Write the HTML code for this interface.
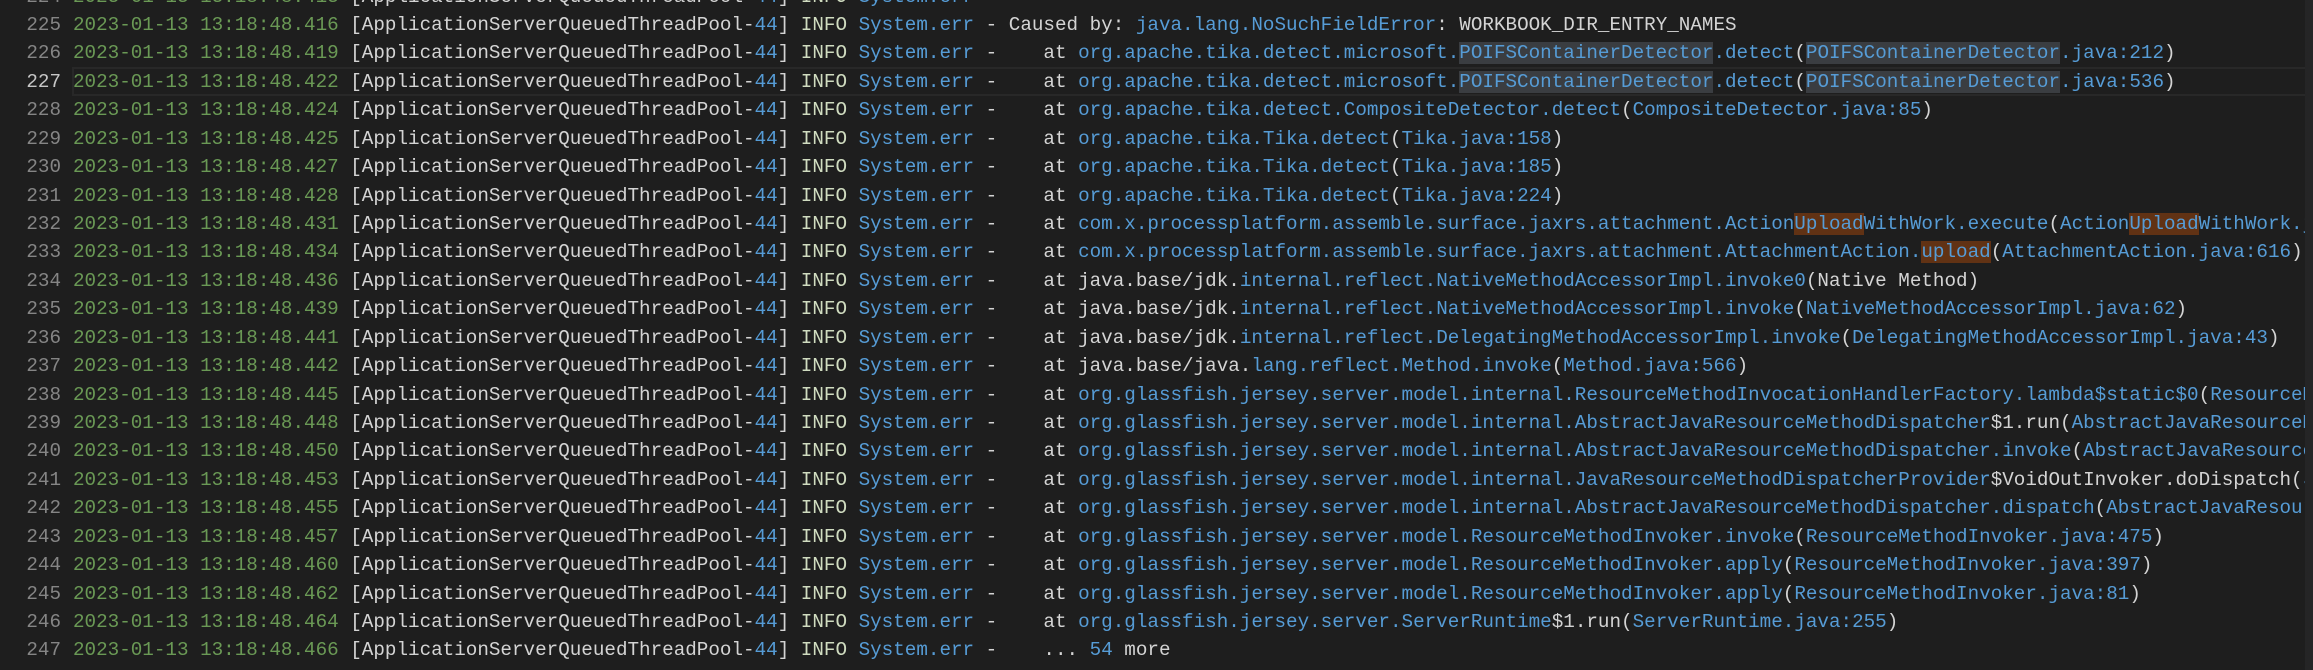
<!DOCTYPE html>
<html><head><meta charset="utf-8">
<style>
html,body{margin:0;padding:0;background:#1e1e1e;width:2313px;height:670px;overflow:hidden;}
.ed{position:absolute;left:0;top:0;width:2305px;height:670px;overflow:hidden;font-family:"Liberation Mono",monospace;font-size:19.25px;}
.sb{position:absolute;left:2305px;top:0;width:8px;height:670px;background:#252526;}
.r{position:absolute;left:0;height:28.43px;line-height:28.43px;white-space:pre;width:2305px;}
.n{position:absolute;left:0;width:61px;text-align:right;color:#858585;}
.c{position:absolute;left:73px;color:#d4d4d4;}
.g{color:#6a9955}.b{color:#569cd6}.i{color:#d0dcc0}
.h{background:#3a3d41}.o{background:#613214}
.cur{position:absolute;left:72px;top:67px;width:2240px;height:25px;border:2px solid #282828;border-right:none;}
</style></head><body>
<div class="ed">
<div class="cur"></div>
<div class="r" style="top:-17.5px"><span class="n">224</span><span class="c"><span class="g">2023-01-13 13:18:48.413</span> [ApplicationServerQueuedThreadPool-<span class="b">44</span>] <span class="i">INFO</span> <span class="b">System.err</span> - </span></div>
<div class="r" style="top:10.93px"><span class="n">225</span><span class="c"><span class="g">2023-01-13 13:18:48.416</span> [ApplicationServerQueuedThreadPool-<span class="b">44</span>] <span class="i">INFO</span> <span class="b">System.err</span> - Caused by: <span class="b">java.lang.NoSuchFieldError</span>: WORKBOOK_DIR_ENTRY_NAMES</span></div>
<div class="r" style="top:39.36px"><span class="n">226</span><span class="c"><span class="g">2023-01-13 13:18:48.419</span> [ApplicationServerQueuedThreadPool-<span class="b">44</span>] <span class="i">INFO</span> <span class="b">System.err</span> -    at <span class="b">org.apache.tika.detect.microsoft.<span class="h">POIFSContainerDetector</span>.detect</span>(<span class="b"><span class="h">POIFSContainerDetector</span>.java:212</span>)</span></div>
<div class="r" style="top:67.79px"><span class="n" style="color:#c6c6c6">227</span><span class="c"><span class="g">2023-01-13 13:18:48.422</span> [ApplicationServerQueuedThreadPool-<span class="b">44</span>] <span class="i">INFO</span> <span class="b">System.err</span> -    at <span class="b">org.apache.tika.detect.microsoft.<span class="h">POIFSContainerDetector</span>.detect</span>(<span class="b"><span class="h">POIFSContainerDetector</span>.java:536</span>)</span></div>
<div class="r" style="top:96.22px"><span class="n">228</span><span class="c"><span class="g">2023-01-13 13:18:48.424</span> [ApplicationServerQueuedThreadPool-<span class="b">44</span>] <span class="i">INFO</span> <span class="b">System.err</span> -    at <span class="b">org.apache.tika.detect.CompositeDetector.detect</span>(<span class="b">CompositeDetector.java:85</span>)</span></div>
<div class="r" style="top:124.65px"><span class="n">229</span><span class="c"><span class="g">2023-01-13 13:18:48.425</span> [ApplicationServerQueuedThreadPool-<span class="b">44</span>] <span class="i">INFO</span> <span class="b">System.err</span> -    at <span class="b">org.apache.tika.Tika.detect</span>(<span class="b">Tika.java:158</span>)</span></div>
<div class="r" style="top:153.08px"><span class="n">230</span><span class="c"><span class="g">2023-01-13 13:18:48.427</span> [ApplicationServerQueuedThreadPool-<span class="b">44</span>] <span class="i">INFO</span> <span class="b">System.err</span> -    at <span class="b">org.apache.tika.Tika.detect</span>(<span class="b">Tika.java:185</span>)</span></div>
<div class="r" style="top:181.51px"><span class="n">231</span><span class="c"><span class="g">2023-01-13 13:18:48.428</span> [ApplicationServerQueuedThreadPool-<span class="b">44</span>] <span class="i">INFO</span> <span class="b">System.err</span> -    at <span class="b">org.apache.tika.Tika.detect</span>(<span class="b">Tika.java:224</span>)</span></div>
<div class="r" style="top:209.94px"><span class="n">232</span><span class="c"><span class="g">2023-01-13 13:18:48.431</span> [ApplicationServerQueuedThreadPool-<span class="b">44</span>] <span class="i">INFO</span> <span class="b">System.err</span> -    at <span class="b">com.x.processplatform.assemble.surface.jaxrs.attachment.Action<span class="o">Upload</span>WithWork.execute</span>(<span class="b">Action<span class="o">Upload</span>WithWork.java:120</span>)</span></div>
<div class="r" style="top:238.37px"><span class="n">233</span><span class="c"><span class="g">2023-01-13 13:18:48.434</span> [ApplicationServerQueuedThreadPool-<span class="b">44</span>] <span class="i">INFO</span> <span class="b">System.err</span> -    at <span class="b">com.x.processplatform.assemble.surface.jaxrs.attachment.AttachmentAction.<span class="o">upload</span></span>(<span class="b">AttachmentAction.java:616</span>)</span></div>
<div class="r" style="top:266.8px"><span class="n">234</span><span class="c"><span class="g">2023-01-13 13:18:48.436</span> [ApplicationServerQueuedThreadPool-<span class="b">44</span>] <span class="i">INFO</span> <span class="b">System.err</span> -    at java.base/jdk.<span class="b">internal.reflect.NativeMethodAccessorImpl.invoke0</span>(Native Method)</span></div>
<div class="r" style="top:295.23px"><span class="n">235</span><span class="c"><span class="g">2023-01-13 13:18:48.439</span> [ApplicationServerQueuedThreadPool-<span class="b">44</span>] <span class="i">INFO</span> <span class="b">System.err</span> -    at java.base/jdk.<span class="b">internal.reflect.NativeMethodAccessorImpl.invoke</span>(<span class="b">NativeMethodAccessorImpl.java:62</span>)</span></div>
<div class="r" style="top:323.66px"><span class="n">236</span><span class="c"><span class="g">2023-01-13 13:18:48.441</span> [ApplicationServerQueuedThreadPool-<span class="b">44</span>] <span class="i">INFO</span> <span class="b">System.err</span> -    at java.base/jdk.<span class="b">internal.reflect.DelegatingMethodAccessorImpl.invoke</span>(<span class="b">DelegatingMethodAccessorImpl.java:43</span>)</span></div>
<div class="r" style="top:352.09px"><span class="n">237</span><span class="c"><span class="g">2023-01-13 13:18:48.442</span> [ApplicationServerQueuedThreadPool-<span class="b">44</span>] <span class="i">INFO</span> <span class="b">System.err</span> -    at java.base/java.<span class="b">lang.reflect.Method.invoke</span>(<span class="b">Method.java:566</span>)</span></div>
<div class="r" style="top:380.52px"><span class="n">238</span><span class="c"><span class="g">2023-01-13 13:18:48.445</span> [ApplicationServerQueuedThreadPool-<span class="b">44</span>] <span class="i">INFO</span> <span class="b">System.err</span> -    at <span class="b">org.glassfish.jersey.server.model.internal.ResourceMethodInvocationHandlerFactory.lambda$static$0</span>(<span class="b">ResourceMethodInvocationHandlerFactory.java:52</span>)</span></div>
<div class="r" style="top:408.95px"><span class="n">239</span><span class="c"><span class="g">2023-01-13 13:18:48.448</span> [ApplicationServerQueuedThreadPool-<span class="b">44</span>] <span class="i">INFO</span> <span class="b">System.err</span> -    at <span class="b">org.glassfish.jersey.server.model.internal.AbstractJavaResourceMethodDispatcher</span>$1.run(<span class="b">AbstractJavaResourceMethodDispatcher.java:124</span>)</span></div>
<div class="r" style="top:437.38px"><span class="n">240</span><span class="c"><span class="g">2023-01-13 13:18:48.450</span> [ApplicationServerQueuedThreadPool-<span class="b">44</span>] <span class="i">INFO</span> <span class="b">System.err</span> -    at <span class="b">org.glassfish.jersey.server.model.internal.AbstractJavaResourceMethodDispatcher.invoke</span>(<span class="b">AbstractJavaResourceMethodDispatcher.java:167</span>)</span></div>
<div class="r" style="top:465.81px"><span class="n">241</span><span class="c"><span class="g">2023-01-13 13:18:48.453</span> [ApplicationServerQueuedThreadPool-<span class="b">44</span>] <span class="i">INFO</span> <span class="b">System.err</span> -    at <span class="b">org.glassfish.jersey.server.model.internal.JavaResourceMethodDispatcherProvider</span>$VoidOutInvoker.doDispatch(<span class="b">JavaResourceMethodDispatcherProvider.java:159</span>)</span></div>
<div class="r" style="top:494.24px"><span class="n">242</span><span class="c"><span class="g">2023-01-13 13:18:48.455</span> [ApplicationServerQueuedThreadPool-<span class="b">44</span>] <span class="i">INFO</span> <span class="b">System.err</span> -    at <span class="b">org.glassfish.jersey.server.model.internal.AbstractJavaResourceMethodDispatcher.dispatch</span>(<span class="b">AbstractJavaResourceMethodDispatcher.java:79</span>)</span></div>
<div class="r" style="top:522.67px"><span class="n">243</span><span class="c"><span class="g">2023-01-13 13:18:48.457</span> [ApplicationServerQueuedThreadPool-<span class="b">44</span>] <span class="i">INFO</span> <span class="b">System.err</span> -    at <span class="b">org.glassfish.jersey.server.model.ResourceMethodInvoker.invoke</span>(<span class="b">ResourceMethodInvoker.java:475</span>)</span></div>
<div class="r" style="top:551.1px"><span class="n">244</span><span class="c"><span class="g">2023-01-13 13:18:48.460</span> [ApplicationServerQueuedThreadPool-<span class="b">44</span>] <span class="i">INFO</span> <span class="b">System.err</span> -    at <span class="b">org.glassfish.jersey.server.model.ResourceMethodInvoker.apply</span>(<span class="b">ResourceMethodInvoker.java:397</span>)</span></div>
<div class="r" style="top:579.53px"><span class="n">245</span><span class="c"><span class="g">2023-01-13 13:18:48.462</span> [ApplicationServerQueuedThreadPool-<span class="b">44</span>] <span class="i">INFO</span> <span class="b">System.err</span> -    at <span class="b">org.glassfish.jersey.server.model.ResourceMethodInvoker.apply</span>(<span class="b">ResourceMethodInvoker.java:81</span>)</span></div>
<div class="r" style="top:607.96px"><span class="n">246</span><span class="c"><span class="g">2023-01-13 13:18:48.464</span> [ApplicationServerQueuedThreadPool-<span class="b">44</span>] <span class="i">INFO</span> <span class="b">System.err</span> -    at <span class="b">org.glassfish.jersey.server.ServerRuntime</span>$1.run(<span class="b">ServerRuntime.java:255</span>)</span></div>
<div class="r" style="top:636.39px"><span class="n">247</span><span class="c"><span class="g">2023-01-13 13:18:48.466</span> [ApplicationServerQueuedThreadPool-<span class="b">44</span>] <span class="i">INFO</span> <span class="b">System.err</span> -    ... <span class="b">54</span> more</span></div>
<div class="r" style="top:664.82px"><span class="n">248</span><span class="c"><span class="g">2023-01-13 13:18:48.468</span> [ApplicationServerQueuedThreadPool-<span class="b">44</span>] <span class="i">INFO</span> <span class="b">System.err</span> - </span></div>
</div>
<div class="sb"></div>
</body></html>
